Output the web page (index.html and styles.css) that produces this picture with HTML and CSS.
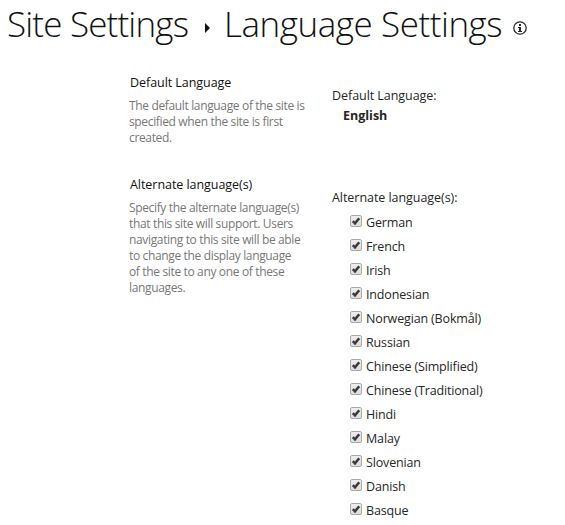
FILE: index.html
```html
<!DOCTYPE html>
<html lang="en">
<head>
<meta charset="utf-8">
<title>Language Settings</title>
<link rel="stylesheet" href="styles.css">
</head>
<body>
<h1 class="title">
  <span class="crumb">Site Settings</span>
  <svg class="arrow" width="5" height="10" viewBox="0 0 5 10"><path d="M0 0 5 5 0 10Z" fill="#111"/></svg>
  <span class="page">Language Settings</span>
  <svg class="info" width="14" height="14" viewBox="0 0 14 14"><circle cx="7" cy="7" r="6.2" fill="none" stroke="#262626" stroke-width="1.3"/><path d="M6 3h2v2H6ZM5 6h3v4h1v1H5v-1h1V7H5Z" fill="#262626"/></svg>
</h1>
<main>
  <section class="row">
    <div class="about">
      <h2>Default Language</h2>
      <p>The default language of the site is<br>specified when the site is first<br>created.</p>
    </div>
    <div class="field">
      <div class="label">Default Language:</div>
      <div class="value">English</div>
    </div>
  </section>
  <section class="row">
    <div class="about">
      <h2>Alternate language(s)</h2>
      <p>Specify the alternate language(s)<br>that this site will support. Users<br>navigating to this site will be able<br>to change the display language<br>of the site to any one of these<br>languages.</p>
    </div>
    <div class="field">
      <div class="label">Alternate language(s):</div>
      <ul class="languages" id="languages"></ul>
    </div>
  </section>
</main>
<script src="script.js"></script>
</body>
</html>
```
FILE: styles.css
```css
body {
  margin: 0;
  background: #fff;
  color: #262626;
  font: 12.5px/16px "Open Sans", "Noto Sans", sans-serif;
}
h1, h2, p, ul { margin: 0; padding: 0; font-weight: 400; }
.title {
  display: flex;
  align-items: center;
  height: 48px;
  padding-left: 7px;
  color: #111;
  font-size: 35px;
  line-height: 48px;
  font-weight: 300;
  white-space: nowrap;
}
.crumb { width: 198px; letter-spacing: -0.82px; }
.page { width: 288px; margin-left: 14px; letter-spacing: -0.45px; }
.arrow { margin-top: 7px; }
.info { margin: 7px 0 0 1px; }
main { padding-top: 26px; }
.row {
  display: grid;
  grid-template-columns: 203px 1fr;
  padding-left: 129px;
  min-height: 102px;
  white-space: nowrap;
}
h2 {
  margin: 1px 0 7px 1px;
  color: #111;
  font-size: 12.5px;
  line-height: 16px;
  letter-spacing: -0.05px;
}
.about p { color: #777; font-size: 12px; letter-spacing: -0.35px; }
.field { padding-top: 14px; }
.label { letter-spacing: -0.05px; }
.value { margin: 4px 0 0 11px; font-weight: 700; }
.languages { list-style: none; padding: 5px 0 0 18px; }
.languages label {
  display: flex;
  align-items: center;
  gap: 4px;
  height: 24px;
}
.languages input {
  position: absolute;
  opacity: 0;
}
.name { letter-spacing: -0.15px; }
.box {
  box-sizing: border-box;
  width: 12px;
  height: 12px;
  margin-top: -4px;
  border: 1px solid #aaa;
  border-radius: 2px;
  background: linear-gradient(#eee, #ddd);
}
.box svg { display: block; }
```
FILE: script.js
```javascript
const languages = ["German", "French", "Irish", "Indonesian", "Norwegian (Bokmål)", "Russian", "Chinese (Simplified)", "Chinese (Traditional)", "Hindi", "Malay", "Slovenian", "Danish", "Basque"];
document.getElementById("languages").innerHTML = languages.map(name =>
  `<li><label><input type="checkbox" checked><span class="box"><svg width="10" height="10" viewBox="0 0 10 10"><path d="M1.8 5.2 4 7.4 8.2 2.2" fill="none" stroke="#3c3c3c" stroke-width="2.5"/></svg></span><span class="name">${name}</span></label></li>`
).join("");
```
